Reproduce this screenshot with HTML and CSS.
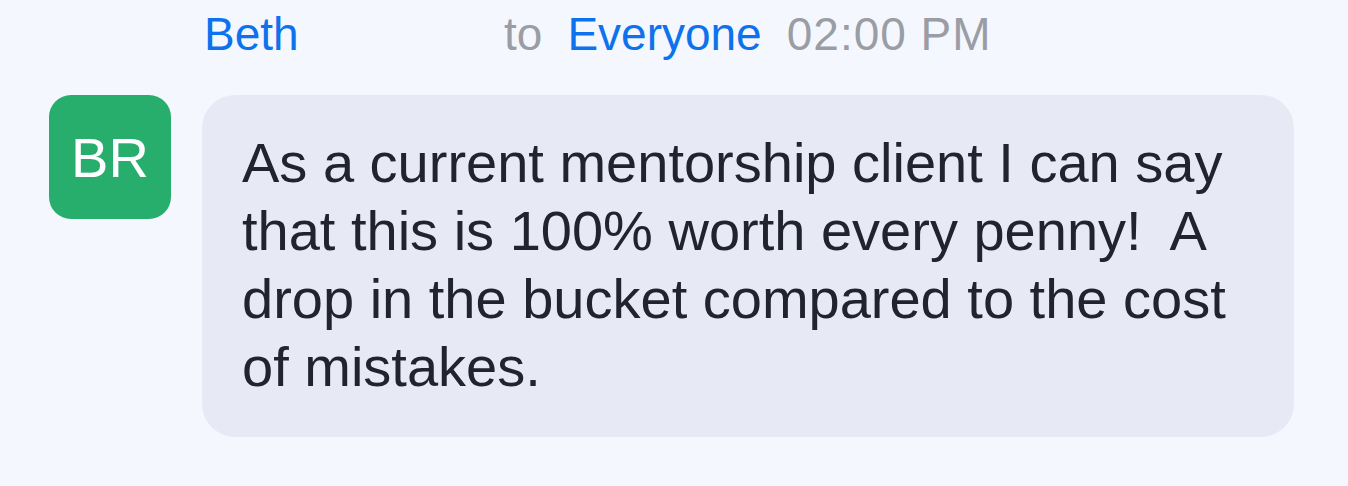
FILE: index.html
```html
<!DOCTYPE html>
<html lang="en">

<head>
    <meta charset="UTF-8">
    <meta name="viewport" content="width=device-width, initial-scale=1.0">
    <title>Chat</title>
    <link rel="stylesheet" href="styles.css">
</head>

<body>
    <div class="message">
        <div class="message-header">
            <span class="sender">Beth</span>
            <span class="muted">to</span>
            <span class="receiver">Everyone</span>
            <span class="muted time">02:00 PM</span>
        </div>

        <div class="message-row">
            <div class="avatar">BR</div>
            <div class="bubble">
                As a current mentorship client I can say that this is 100% worth every penny!&nbsp; A drop in the bucket compared to the cost of mistakes.
            </div>
        </div>
    </div>
</body>

</html>
```

FILE: styles.css
```css
body {
    font-family: "Liberation Sans", Arial, sans-serif;
    margin: 0;
    padding: 0;
    background-color: #f4f7fe;
    color: #23232f;
}

.message {
    display: flex;
    flex-direction: column;
    gap: 27px;
}

.message-header {
    display: flex;
    align-items: baseline;
    gap: 25px;
    padding-left: 204px;
    font-size: 46px;
    line-height: 68px;
    white-space: nowrap;
}

.sender {
    width: 275px;
    color: #0e72ed;
}

.receiver {
    color: #0e72ed;
}

.muted {
    color: #9b9da4;
}

.time {
    letter-spacing: 1px;
}

.message-row {
    display: flex;
    align-items: flex-start;
    gap: 31px;
    padding-left: 49px;
    padding-right: 54px;
}

.avatar {
    flex: 0 0 122px;
    height: 124px;
    border-radius: 22px;
    background-color: #27ae6c;
    color: #ffffff;
    font-size: 56px;
    display: flex;
    align-items: center;
    justify-content: center;
}

.bubble {
    flex: 1;
    background-color: #e7eaf5;
    border-radius: 33px;
    padding: 34px 40px 36px 40px;
    font-size: 56px;
    line-height: 68px;
}
```
